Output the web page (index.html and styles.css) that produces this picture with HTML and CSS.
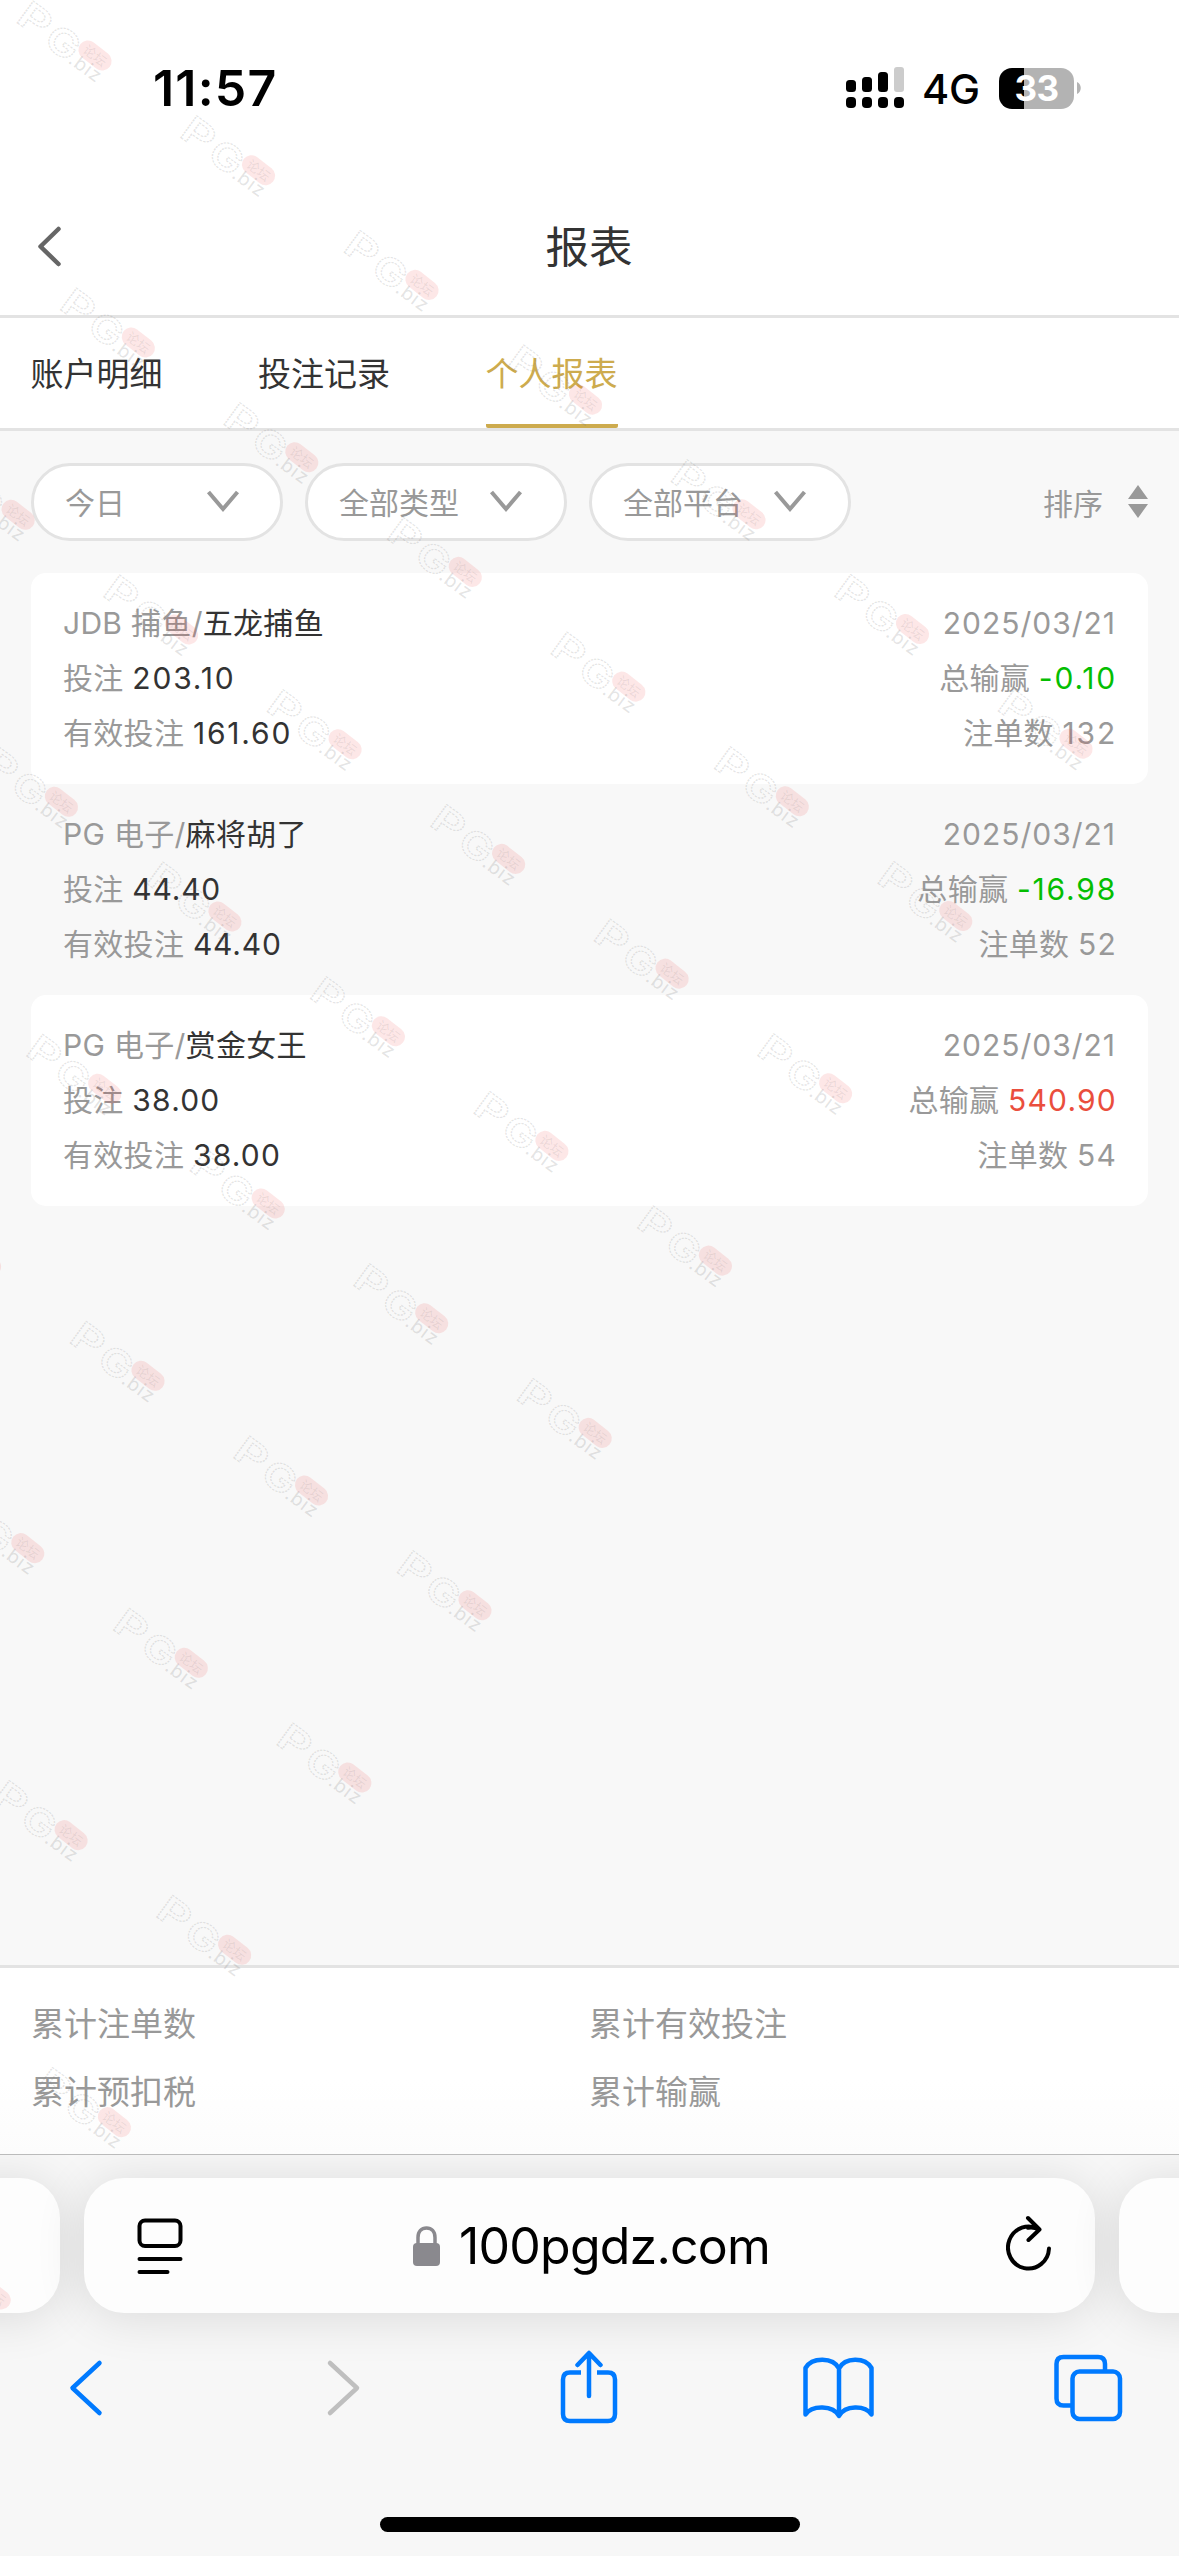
FILE: index.html
```html
<!DOCTYPE html>
<html lang="zh-CN">
<head>
<meta charset="utf-8">
<title>报表</title>
<link rel="stylesheet" href="styles.css">
</head>
<body>
<div class="screen">
  <div class="status">
    <span class="time">11:57</span>
    <div class="status-right">
      <svg class="signal" width="58" height="42" viewBox="0 0 58 42">
        <rect x="0" y="13" width="10" height="12" rx="3.5"/><rect x="16" y="10" width="10" height="15" rx="3.5"/><rect x="32" y="5" width="10" height="20" rx="3.5"/><rect x="48" y="0" width="10" height="25" rx="3" fill="#ccc"/>
        <rect x="0" y="30" width="10" height="11" rx="4"/><rect x="16" y="30" width="10" height="11" rx="4"/><rect x="32" y="30" width="10" height="11" rx="4"/><rect x="48" y="30" width="10" height="11" rx="4"/>
      </svg>
      <span class="network">4G</span>
      <div class="battery">33</div>
      <svg class="nub" width="5" height="12" viewBox="0 0 5 12"><path d="M0 0C5 2 5 10 0 12Z" fill="#b3b3b3"/></svg>
    </div>
  </div>

  <header class="header">
    <svg class="back" width="28" height="44" viewBox="0 0 28 44"><path d="M22.500 5L4.500 22.500L22.500 40" fill="none" stroke="#666" stroke-width="4.500" stroke-linecap="round" stroke-linejoin="round"/></svg>
    <h1>报表</h1>
  </header>

  <nav class="tabs">
    <a class="tab">账户明细</a>
    <a class="tab">投注记录</a>
    <a class="tab active">个人报表</a>
  </nav>

  <main class="content">
    <div class="filters">
      <div class="select today"><span>今日</span><svg class="chev" width="34" height="24" viewBox="0 0 34 24"><path d="M2.500 3L17 20L31.500 3"/></svg></div>
      <div class="select"><span>全部类型</span><svg class="chev" width="34" height="24" viewBox="0 0 34 24"><path d="M2.500 3L17 20L31.500 3"/></svg></div>
      <div class="select"><span>全部平台</span><svg class="chev" width="34" height="24" viewBox="0 0 34 24"><path d="M2.500 3L17 20L31.500 3"/></svg></div>
      <div class="sort"><span>排序</span><svg width="20" height="34" viewBox="0 0 20 34"><path d="M10 0L20 14H0ZM10 33L20 19H0Z" fill="#999"/></svg></div>
    </div>

    <section class="card white">
      <div class="row"><span>JDB 捕鱼/<b>五龙捕鱼</b></span><span class="date">2025/03/21</span></div>
      <div class="row"><span>投注 <b class="num ones">203.10</b></span><span>总输赢 <i class="num ones loss">-0.10</i></span></div>
      <div class="row"><span>有效投注 <b class="num ones">161.60</b></span><span>注单数 <i class="num ones">132</i></span></div>
    </section>
    <section class="card">
      <div class="row"><span>PG 电子/<b>麻将胡了</b></span><span class="date">2025/03/21</span></div>
      <div class="row"><span>投注 <b class="num fours">44.40</b></span><span>总输赢 <i class="num ones loss">-16.98</i></span></div>
      <div class="row"><span>有效投注 <b class="num fours">44.40</b></span><span>注单数 <i class="num">52</i></span></div>
    </section>
    <section class="card white">
      <div class="row"><span>PG 电子/<b>赏金女王</b></span><span class="date">2025/03/21</span></div>
      <div class="row"><span>投注 <b class="num">38.00</b></span><span>总输赢 <i class="num win">540.90</i></span></div>
      <div class="row"><span>有效投注 <b class="num">38.00</b></span><span>注单数 <i class="num">54</i></span></div>
    </section>
  </main>

  <footer class="totals">
    <span>累计注单数</span><span>累计有效投注</span>
    <span>累计预扣税</span><span>累计输赢</span>
  </footer>

  <div class="browser">
    <div class="pages">
      <div class="page side"></div>
      <div class="page address">
        <svg width="46" height="56" viewBox="0 0 46 56" fill="none" stroke="#000" stroke-width="4" stroke-linecap="round"><rect x="2.500" y="2.500" width="41" height="25.500" rx="5.500"/><path d="M2.500 41H43.500M2.500 54H30.500"/></svg>
        <div class="url">
          <svg width="27" height="40" viewBox="0 0 27 40"><rect x="0" y="17" width="27" height="23" rx="4" fill="#8a898e"/><path d="M5 19V11.500C5 5.500 8.500 2 13.500 2S22 5.500 22 11.500V19" fill="none" stroke="#8a898e" stroke-width="3.500"/></svg>
          <span>100pgdz.com</span>
        </div>
        <svg class="reload" width="46" height="58" viewBox="0 0 46 58" fill="none" stroke="#000" stroke-width="4" stroke-linecap="round" stroke-linejoin="round"><path d="M43 34.500A20.500 21 0 1 1 33 15.500M22 4L33.500 15.500L22.500 26M33 15.500C29 13.500 24.500 13.300 22 13.800"/></svg>
      </div>
      <div class="page side"></div>
    </div>
    <div class="toolbar">
      <svg width="72" height="76" viewBox="0 0 72 76"><path d="M49.500 13L22.500 38L49.500 63"/></svg>
      <svg width="72" height="76" viewBox="0 0 72 76" class="disabled"><path d="M29 13L56 38L29 63"/></svg>
      <svg width="72" height="76" viewBox="0 0 72 76"><path d="M29 22.500H18Q11 22.500 11 29.500V64Q11 71 18 71H56Q63 71 63 64V29.500Q63 22.500 56 22.500H45" stroke-linecap="butt"/><path d="M37 46V3.500M25.500 15L37 3L48.500 15"/></svg>
      <svg width="72" height="76" viewBox="0 0 72 76" class="book"><path d="M37 65V18.500C31 7 10 7 3.500 18V64.500C10 55 31 55 37 66C43 55 63 55 69.500 64.500V18C63 7 43 7 37 18.500"/></svg>
      <svg width="72" height="76" viewBox="0 0 72 76"><rect x="19.500" y="21.500" width="47.500" height="47.500" rx="7"/><path d="M52 21.500V14Q52 7 45 7H10.500Q3.500 7 3.500 14V48.500Q3.500 55.500 10.500 55.500H19.500" stroke-linecap="butt"/></svg>
    </div>
    <div class="home"></div>
  </div>

  <svg class="watermarks" id="watermarks" width="1179" height="2556" viewBox="0 0 1179 2556">
    <defs>
      <g id="mark">
        <text class="mark-letter" transform="translate(-29 -21) rotate(36) scale(1.35 1)" y="12">P</text>
        <text class="mark-letter" transform="translate(-1 2) rotate(36) scale(1.2 1)" y="12">G</text>
        <g transform="translate(31.500 14) rotate(38)">
          <rect x="-18.500" y="-9.500" width="37" height="19" rx="9.500" class="mark-pill"/>
          <text y="5" class="mark-cn">论坛</text>
        </g>
        <text class="mark-biz" transform="translate(22 26.500) rotate(36)" y="6">.biz</text>
      </g>
    </defs>
  </svg>
</div>
<script src="watermark.js"></script>
</body>
</html>
```
FILE: watermark.js
```js
// Tiles the diagonal brand mark over the screen, one mark fewer on each lower row.
const layer = document.getElementById('watermarks');
for (let row = 0; row < 10; row++) {
  for (let n = -4; n <= 6 - row; n++) {
    const x = 63.500 + 163.500 * n + 43.300 * row;
    const y = 41.500 + 114.700 * n + 287 * row;
    if (x < -60 || y < 0) continue;
    const use = document.createElementNS('http://www.w3.org/2000/svg', 'use');
    use.setAttribute('href', '#mark');
    use.setAttribute('x', x);
    use.setAttribute('y', y);
    layer.appendChild(use);
  }
}
```
FILE: styles.css
```css
* { box-sizing: border-box; }
body { margin: 0; background: #f7f7f7; }
.screen {
  position: relative;
  width: 1179px;
  height: 2556px;
  overflow: hidden;
  display: flex;
  flex-direction: column;
  font-family: Inter, "Noto Sans CJK SC", sans-serif;
  color: #333;
}
b, i { font-weight: 400; font-style: normal; }

.status {
  height: 177px;
  background: #fff;
  color: #000;
  display: flex;
  justify-content: space-between;
  align-items: flex-start;
  padding: 58px 97px 0 153px;
}
.time { font-size: 50px; font-weight: 600; line-height: 60px; letter-spacing: 1.200px; }
.status-right { display: flex; align-items: center; height: 42px; margin-top: 9px; }
.network { font-size: 41.500px; line-height: 42px; width: 57px; margin-left: 18px; margin-right: 1px; padding-top: 1px; letter-spacing: -0.3px; font-weight: 500; }
.battery {
  width: 75px;
  height: 41px;
  margin-left: 19px;
  border-radius: 13px;
  background: linear-gradient(90deg, #000 25px, #b3b3b3 25px);
  color: #fff;
  font-size: 35px;
  font-weight: 700;
  line-height: 41px;
  text-align: center;
  letter-spacing: -0.5px;
}
.nub { margin-left: 3px; }

.header {
  height: 141px;
  background: #fff;
  border-bottom: 3px solid #e3e3e3;
  display: grid;
  grid-template-columns: 150px 1fr 150px;
  align-items: center;
}
.back { margin-left: 36px; }
h1 { margin: 0; font-size: 43.500px; font-weight: 400; text-align: center; line-height: 60px; padding: 2px 1px 0 0; }

.tabs {
  height: 113px;
  background: #fff;
  border-bottom: 3px solid #e3e3e3;
  display: flex;
  gap: 95.500px;
  padding-left: 30.500px;
}
.tab { height: 110px; font-size: 33px; line-height: 112px; }
.tab.active { color: #cdab4e; border-bottom: 4px solid #cdab4e; border-radius: 2px; }

.content { height: 1534px; background: #f8f8f8; padding: 32px 31px 0; }
.filters { display: flex; gap: 22px; height: 78px; margin-bottom: 32px; font-size: 30px; color: #999; }
.select {
  width: 262px;
  border: 3px solid #e3e3e3;
  border-radius: 39px;
  background: #fff;
  display: flex;
  justify-content: space-between;
  align-items: center;
  padding: 0 41px 2px 31px;
}
.today { width: 252px; padding-right: 40px; }
.chev path { fill: none; stroke: #999; stroke-width: 4; }
.sort { margin-left: auto; display: flex; align-items: center; gap: 25px; }

.card {
  height: 211px;
  padding: 23px 31px 23px 32px;
  border-radius: 15px;
  font-size: 30px;
  color: #999;
}
.card.white { background: #fff; }
.row { display: flex; justify-content: space-between; height: 55px; line-height: 55px; letter-spacing: .3px; white-space: nowrap; }
.num { letter-spacing: 1.200px; }
.ones { letter-spacing: 1.800px; }
.fours { letter-spacing: .8px; }
.date { letter-spacing: 1px; margin-right: 1px; }
b { color: #333; }
.loss { color: #04be02; }
.win { color: #ea4e3d; }

.totals {
  height: 190px;
  background: linear-gradient(#fff 60%, #fcfcfc);
  border-top: 3px solid #e3e3e3;
  border-bottom: 1px solid #bbb;
  display: grid;
  grid-template-columns: 1fr 1fr;
  grid-auto-rows: 68px;
  padding: 22px 0 0 31px;
  font-size: 33px;
  line-height: 68px;
  color: #999;
}
.totals span:nth-child(even) { margin-left: -16px; }

.browser { flex: 1; background: #f7f7f7; overflow: hidden; padding-top: 23px; }
.pages { display: flex; gap: 24px; margin: 0 -60px 0 -60px; }
.page {
  height: 135px;
  border-radius: 40px;
  background: #fdfdfd;
  box-shadow: 0 4px 50px rgba(0, 0, 0, .12);
}
.side { width: 120px; flex: none; }
.side:last-child { width: 160px; }
.address { width: 1011px; flex: none; display: flex; align-items: center; justify-content: space-between; padding: 0 43px 0 53px; }
.url { display: flex; align-items: center; gap: 19px; margin-right: 6px; color: #000; font-size: 50px; line-height: 60px; letter-spacing: -0.8px; }
.reload { margin-bottom: 6px; }
.toolbar { display: flex; justify-content: space-between; padding: 0 54px 0 50px; margin-top: 37px; }
.toolbar svg { fill: none; stroke: #007aff; stroke-width: 4.500; stroke-linecap: round; stroke-linejoin: round; }
.toolbar .disabled { stroke: #bfbfbf; }
.home { width: 420px; height: 15px; border-radius: 8px; background: #000; margin: 91px auto 0; }

.watermarks { position: absolute; left: 0; top: 0; pointer-events: none; }
.mark-letter { font: 600 37px Inter, sans-serif; text-anchor: middle; fill: none; stroke: #787878; stroke-opacity: .2; stroke-width: 1.200; stroke-dasharray: 2 1; }
.mark-pill { fill: #f02828; fill-opacity: .11; }
.mark-cn { font: 400 13px "Noto Sans CJK SC", sans-serif; text-anchor: middle; fill: #666; fill-opacity: .12; }
.mark-biz { font: 400 19px Inter, sans-serif; text-anchor: middle; fill: #777; fill-opacity: .2; letter-spacing: 1px; }
```
